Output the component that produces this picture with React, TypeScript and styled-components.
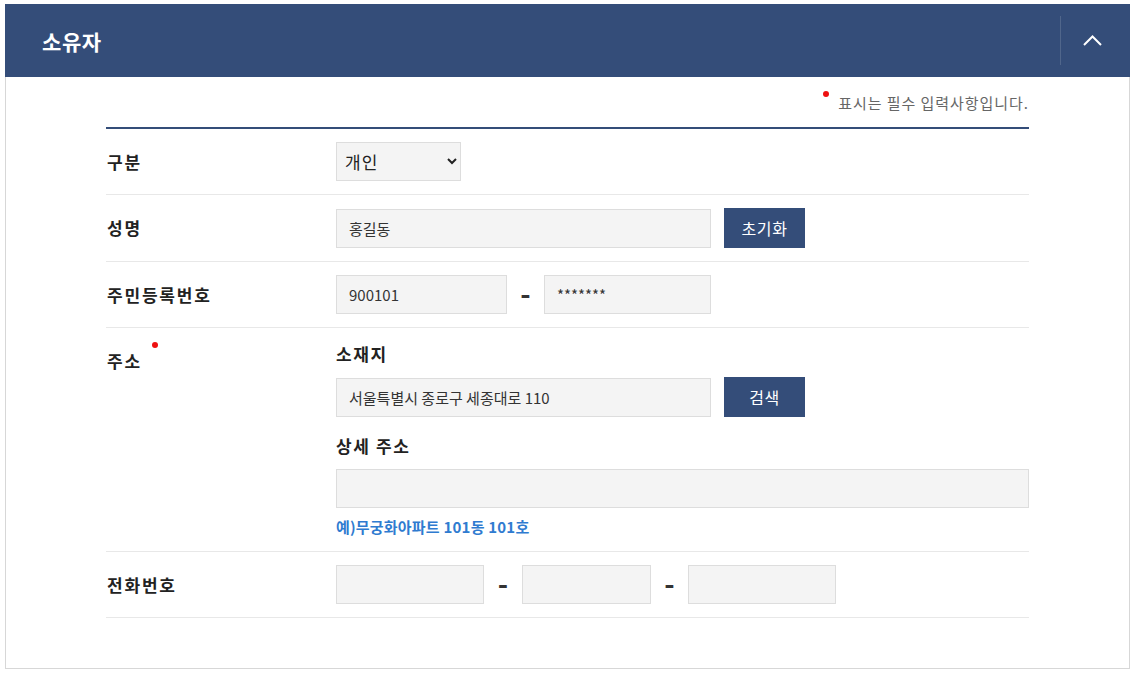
import React from "react";
import styled, { createGlobalStyle } from "styled-components";

const GlobalStyle = createGlobalStyle`
  * { box-sizing: border-box; }
  body {
    margin: 0;
    background: #ffffff;
    font-family: "Noto Sans CJK KR", "Noto Sans", sans-serif;
    color: #222222;
  }
`;

const NAVY = "#344d79";

const Page = styled.div`
  padding: 4px 7px 8px 5px;
`;

const Header = styled.div`
  height: 73px;
  background-color: ${NAVY};
  display: flex;
  align-items: center;
  justify-content: space-between;
  padding-left: 37px;
`;

const Title = styled.h2`
  margin: 0;
  color: #ffffff;
  font-size: 21px;
  font-weight: bold;
  letter-spacing: 0.6px;
`;

const ToggleBtn = styled.button`
  width: 64px;
  height: 49px;
  margin-right: 6px;
  border: none;
  border-left: 1px solid rgba(255, 255, 255, 0.14);
  background: transparent;
  display: flex;
  align-items: center;
  justify-content: center;
  padding: 0;
  cursor: pointer;
`;

const Body = styled.div`
  border: 1px solid #d7d7d7;
  border-top: none;
  padding: 0 100px 50px;
`;

const Note = styled.div`
  height: 50px;
  display: flex;
  align-items: center;
  justify-content: flex-end;
  font-size: 15px;
  letter-spacing: 0.95px;
  color: #666666;
  padding-top: 1px;
`;

const Dot = styled.span`
  display: inline-block;
  width: 6px;
  height: 6px;
  border-radius: 50%;
  background: #ee1111;
  margin-right: 9px;
  align-self: flex-start;
  margin-top: 13px;
`;

const Table = styled.div`
  border-top: 2px solid ${NAVY};
`;

const Row = styled.div`
  display: flex;
  align-items: flex-start;
  padding: 13px 0;
  border-bottom: 1px solid #e8e8e8;
`;

const Label = styled.div<{ $required?: boolean }>`
  position: relative;
  width: 230px;
  flex-shrink: 0;
  padding-left: 1px;
  font-size: 17px;
  font-weight: bold;
  line-height: 39px;
  color: #222222;
  letter-spacing: 1.8px;
  &::after {
    content: "";
    display: ${(p) => (p.$required ? "block" : "none")};
    position: absolute;
    left: 46px;
    top: 1px;
    width: 6px;
    height: 6px;
    border-radius: 50%;
    background: #ee1111;
  }
`;

const Field = styled.div`
  flex: 1;
  display: flex;
  flex-direction: column;
`;

const Line = styled.div`
  display: flex;
  align-items: center;
`;

const SubLabel = styled.div<{ $top?: number }>`
  font-size: 17px;
  font-weight: bold;
  line-height: 26px;
  letter-spacing: 1.6px;
  color: #222222;
  margin-top: ${(p) => p.$top ?? 0}px;
  margin-bottom: 10px;
`;

const Input = styled.input<{ $w?: number }>`
  width: ${(p) => (p.$w ? `${p.$w}px` : "100%")};
  height: 39px;
  background: #f4f4f4;
  border: 1px solid #dddddd;
  padding: 0 12px;
  font-family: inherit;
  font-size: 15px;
  color: #333333;
  outline: none;
`;

const Select = styled.select`
  width: 125px;
  height: 39px;
  background: #f4f4f4;
  border: 1px solid #dddddd;
  border-radius: 0;
  padding: 0 4px;
  font-family: inherit;
  font-size: 17px;
  letter-spacing: 1px;
  color: #222222;
`;

const NavyBtn = styled.button`
  width: 81px;
  height: 40px;
  margin-left: 13px;
  background: ${NAVY};
  color: #ffffff;
  border: none;
  font-family: inherit;
  font-size: 16px;
  letter-spacing: 0.6px;
  cursor: pointer;
`;

const Dash = styled.span<{ $w: number }>`
  width: ${(p) => p.$w}px;
  text-align: center;
  font-size: 28px;
  line-height: 1;
  padding-bottom: 3px;
  font-weight: bold;
  color: #333333;
`;

const Hint = styled.div`
  margin-top: 8px;
  font-size: 15px;
  font-weight: bold;
  line-height: 22px;
  color: #2f7bd0;
  letter-spacing: 0.2px;
`;

const ChevronUp = () => (
  <svg width="19" height="11" viewBox="0 0 19 11" fill="none">
    <polyline points="1,10 9.5,1.5 18,10" stroke="#ffffff" strokeWidth="2" />
  </svg>
);

export default function App() {
  return (
    <Page>
      <GlobalStyle />
      <Header>
        <Title>소유자</Title>
        <ToggleBtn aria-label="접기">
          <ChevronUp />
        </ToggleBtn>
      </Header>
      <Body>
        <Note>
          <Dot />
          표시는 필수 입력사항입니다.
        </Note>
        <Table>
          <Row>
            <Label>구분</Label>
            <Field>
              <Line>
                <Select defaultValue="개인">
                  <option>개인</option>
                  <option>법인</option>
                </Select>
              </Line>
            </Field>
          </Row>
          <Row>
            <Label>성명</Label>
            <Field>
              <Line>
                <Input $w={375} defaultValue="홍길동" />
                <NavyBtn>초기화</NavyBtn>
              </Line>
            </Field>
          </Row>
          <Row>
            <Label>주민등록번호</Label>
            <Field>
              <Line>
                <Input $w={171} defaultValue="900101" />
                <Dash $w={37}>-</Dash>
                <Input $w={167} defaultValue="*******" />
              </Line>
            </Field>
          </Row>
          <Row>
            <Label $required>주소</Label>
            <Field>
              <SubLabel>소재지</SubLabel>
              <Line>
                <Input $w={375} defaultValue="서울특별시 종로구 세종대로 110" />
                <NavyBtn>검색</NavyBtn>
              </Line>
              <SubLabel $top={16}>상세 주소</SubLabel>
              <Input />
              <Hint>예)무궁화아파트 101동 101호</Hint>
            </Field>
          </Row>
          <Row>
            <Label>전화번호</Label>
            <Field>
              <Line>
                <Input $w={148} />
                <Dash $w={38}>-</Dash>
                <Input $w={129} />
                <Dash $w={37}>-</Dash>
                <Input $w={148} />
              </Line>
            </Field>
          </Row>
        </Table>
      </Body>
    </Page>
  );
}
